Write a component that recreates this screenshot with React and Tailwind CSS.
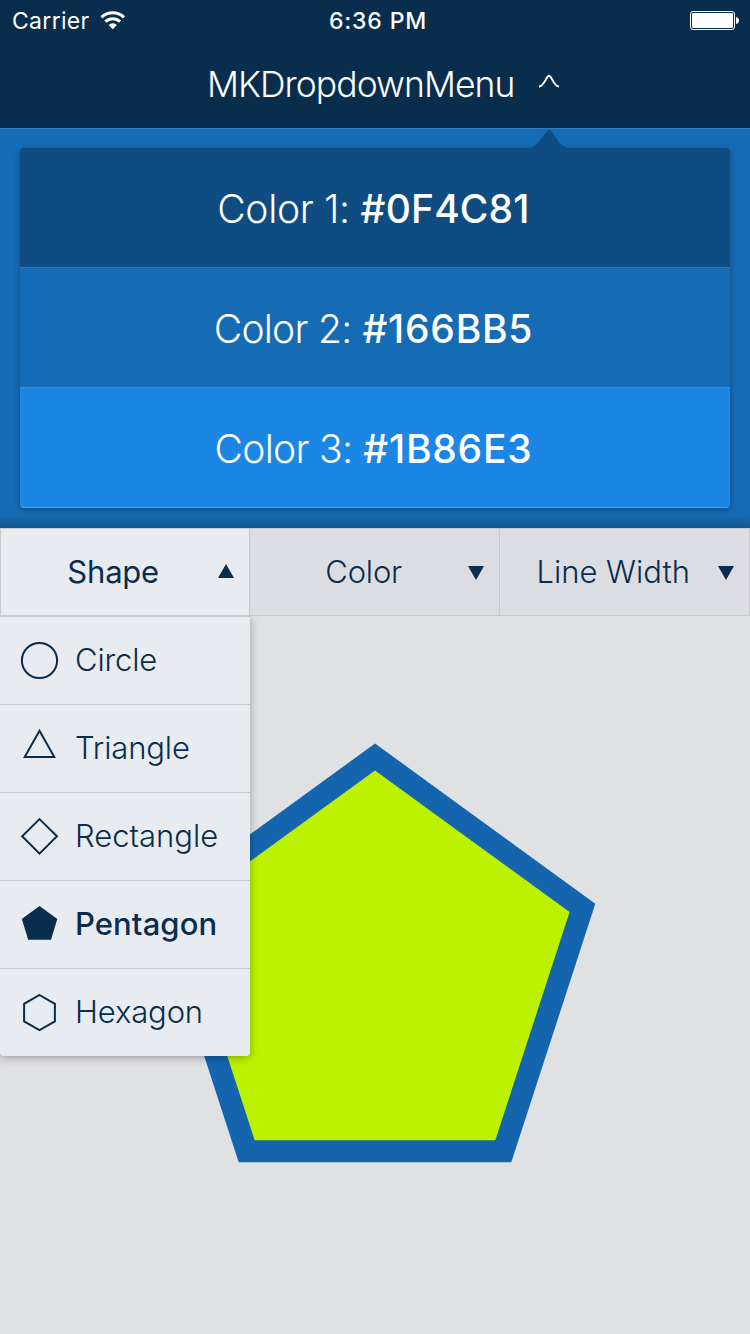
import React from "react";

const colors = [
  { label: "Color 1:", value: "#0F4C81", row: "bg-[#0F4C81] border-[#3f709a]", labelTrack: "tracking-[-0.35px]", valueTrack: "tracking-[0.15px]" },
  { label: "Color 2:", value: "#166BB5", row: "bg-[#166BB5] border-[#4589c4]", labelTrack: "tracking-[-0.75px]", valueTrack: "tracking-[0.75px]" },
  { label: "Color 3:", value: "#1B86E3", row: "bg-[#1B86E3] border-[#499eE9]", labelTrack: "tracking-[-0.7px]", valueTrack: "tracking-[0.75px]" },
];

const outline = { fill: "none", stroke: "#082D4D", strokeWidth: 2 };

const shapes = [
  { name: "Circle", track: "tracking-[-0.15px]", icon: <circle cx="19.5" cy="20.5" r="17.6" {...outline} /> },
  { name: "Triangle", track: "tracking-[-0.12px]", icon: <path d="M19.5 7.2 34.3 33.5H4.7Z" transform="translate(0 -4.5)" {...outline} /> },
  { name: "Rectangle", track: "", icon: <path d="M19.5 3.4 37 20.5 19.5 37.9 2.2 20.5Z" transform="translate(0 -0.3)" {...outline} /> },
  { name: "Pentagon", track: "tracking-[0.1px]", icon: <path d="M19.5 2 37.3 15 31 35.700H8.2L1.8 15Z" fill="#082D4D" />, selected: true },
  { name: "Hexagon", track: "tracking-[-0.15px]", icon: <path d="M19.5 3 34.9 11.800v17.6L19.5 38 4.1 29.400V11.800Z" {...outline} /> },
];

function StatusBar() {
  return (
    <div className="grid h-10 grid-cols-3 items-center pl-3 pr-[11px] text-[23px] leading-10">
      <div className="flex items-center gap-[10px]">
        <span className="pt-px tracking-[0.3px]">Carrier</span>
        <svg className="mb-px" width="26" height="20" viewBox="0 0 26 20" fill="none" stroke="#fff" strokeWidth="3">
          <path d="M1.5 7.3a16.3 16.3 0 0 1 22.5 0" />
          <path d="M5.4 11.7a10.6 10.6 0 0 1 14.7 0" />
          <path d="M12.75 19.2 8.6 15a5.8 5.8 0 0 1 8.3 0Z" fill="#fff" stroke="none" />
        </svg>
      </div>
      <span className="whitespace-nowrap pl-[5px] pt-px text-center font-medium tracking-[0.85px]">6:36 PM</span>
      <svg className="mb-[2px] justify-self-end" width="49" height="20" viewBox="0 0 49 20">
        <rect x="0.5" y="1.5" width="44" height="18" rx="2.5" fill="none" stroke="#fff" />
        <rect x="2" y="3" width="41" height="15" rx="1.2" fill="#fff" />
        <path d="M46 7c2 .5 3 1.800 3 3.500s-1 3-3 3.500Z" fill="#fff" />
      </svg>
    </div>
  );
}

function Tab({ label, open, className, labelClass }) {
  return (
    <button
      className={`flex h-full items-center justify-end border-[#c7c7cc] pr-[15px] pt-px text-[31px] ${open ? "bg-[#E8EBF0] font-normal" : "bg-[#DCDDE2] font-light"} ${className}`}
    >
      <span className={`whitespace-nowrap ${labelClass}`}>{label}</span>
      <svg className={open ? "mb-[3px]" : ""} width="16" height="14" viewBox="0 0 16 14" fill="#082D4D">
        {open ? <path d="M8 0 16 14H0Z" /> : <path d="M0 0H16L8 14Z" />}
      </svg>
    </button>
  );
}

export default function App() {
  return (
    <div className="flex h-[1334px] w-[750px] flex-col overflow-hidden bg-[#E0E1E3] font-['Inter',sans-serif] text-[#082D4D]">
      <header className="h-32 bg-[#092D4D] text-white">
        <StatusBar />
        <div className="flex h-[88px] items-center pl-[207px]">
          <h1 className="whitespace-nowrap pt-0.5 text-[35.500px] font-light leading-[44px] tracking-[-0.97px]">MKDropdownMenu</h1>
          <svg className="-mt-1.5 ml-[24.500px]" width="20" height="14" viewBox="0 0 20 14" fill="none" stroke="#fff" strokeWidth="2">
            <path d="M0 12.600C5.200 12.600 7.300 1.800 10 1.800s4.800 10.800 10 10.800" />
          </svg>
        </div>
      </header>

      <section className="relative h-[400px] border-t border-[#2f7cc0] bg-[#166BB5] px-5 pt-[19px] text-white">
        <svg className="absolute left-[529px] top-px" width="40" height="18" viewBox="0 0 40 18" fill="#0F4C81">
          <path d="M0 18C9 17 14 5 17.500 1.400Q20 -1 22.500 1.400C26 5 31 17 40 18Z" />
        </svg>
        <ul className="overflow-hidden rounded-[4px] shadow-[0_2px_6px_rgba(0,0,0,0.3)]">
          {colors.map((c) => (
            <li key={c.value} className={`flex h-[120px] items-center justify-center gap-[11px] border-b pr-[3px] pt-[3px] text-[39px] ${c.row}`}>
              <span className={`font-light ${c.labelTrack}`}>{c.label}</span>
              <span className={`font-medium ${c.valueTrack}`}>{c.value}</span>
            </li>
          ))}
        </ul>
        <div className="absolute inset-x-0 bottom-0 h-3 bg-linear-to-t from-black/20 to-transparent" />
      </section>

      <nav className="relative z-10 grid h-[88px] grid-cols-[250px_250px_250px]">
        <Tab label="Shape" open className="border" labelClass="mr-[59px] tracking-[-0.2px]" />
        <Tab label="Color" className="border-y border-r" labelClass="mr-[66px] tracking-[-0.2px]" />
        <Tab label="Line Width" className="border-y border-r" labelClass="mr-[28px]" />
      </nav>

      <main className="relative flex-1">
        <svg className="block" width="750" height="718" viewBox="0 616 750 718">
          <path d="M375 743.500 595.300 903.700 511.300 1162.300H238.700L154.700 903.700Z" fill="#1565AE" />
          <path d="M375 770.500 569.600 912 495.300 1140.300H254.700L180.400 912Z" fill="#BCF200" />
        </svg>
        <ul className="absolute left-0 top-0 w-[250px] overflow-hidden rounded-b-[4px] bg-[#E8EBF0] shadow-[0_2px_8px_rgba(0,0,0,0.3)]">
          {shapes.map((s) => (
            <li key={s.name} className="flex h-[88px] items-center gap-[15px] border-t border-[#c7c7cc] pl-5 text-[31px]">
              <svg width="40" height="41" viewBox="0 0 40 41">{s.icon}</svg>
              <span className={`${s.track} ${s.selected ? "font-medium" : "font-light"}`}>{s.name}</span>
            </li>
          ))}
        </ul>
      </main>
    </div>
  );
}
